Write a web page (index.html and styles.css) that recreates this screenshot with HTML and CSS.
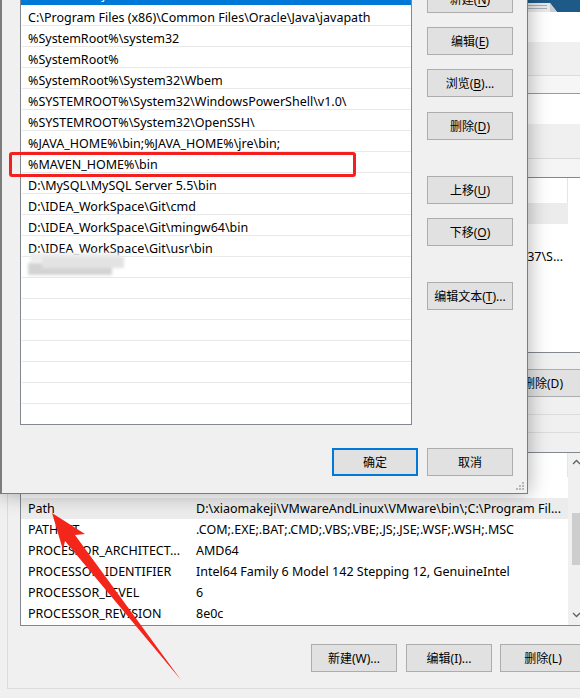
FILE: index.html
```html
<!DOCTYPE html>
<html lang="zh-CN">
<head>
<meta charset="utf-8">
<title>编辑环境变量</title>
<link rel="stylesheet" href="styles.css">
</head>
<body>
<div class="env">
  <div class="titlebar">
    <svg class="tb-icon" width="580" height="12" viewBox="0 0 580 12">
      <path d="M505 3 H550 L557 12 H505 Z" fill="#e6e8ea"/>
      <path d="M550 3 L557 12 H550 Z" fill="#c9ced3"/>
      <path d="M510 5.5 H547 M510 8.5 H547" stroke="#a7adb3" stroke-width="1"/>
    </svg>
  </div>
  <div class="band white h30"></div>
  <div class="band gray h33"></div>

  <div class="group ugroup">
    <div class="u-strip1"></div>
    <div class="u-strip2"></div>
    <div class="u-strip3"></div>
    <div class="vlist ulist">
      <div class="vhead"><span class="c-name">变量</span><span class="c-val">值</span></div>
      <div class="vrow selgray"><span class="c-name">OneDrive</span><span class="c-val">C:\Users\admin\OneDrive</span></div>
      <div class="vrow"><span class="c-name">MAVEN_HOME</span><span class="c-val">D:\apache-maven-3.6.3</span></div>
      <div class="vrow"><span class="c-name">Path</span><span class="c-val right"><span>C:\Users\admin\AppData\Local\Programs\Python\Python37\S...</span></span></div>
      <div class="vrow"><span class="c-name">TEMP</span><span class="c-val">%USERPROFILE%\AppData\Local\Temp</span></div>
    </div>
    <div class="btnrow">
      <span class="btn">新建(N)...</span>
      <span class="btn">编辑(E)...</span>
      <span class="btn">删除(D)</span>
    </div>
  </div>

  <div class="group lgroup">
    <div class="vlist llist">
      <div class="vcols">
        <div class="vhead"><span class="c-name">变量</span><span class="c-val">值</span></div>
        <div class="vrow"><span class="c-name">OS</span><span class="c-val">Windows_NT</span></div>
        <div class="vrow selgray"><span class="c-name">Path</span><span class="c-val">D:\xiaomakeji\VMwareAndLinux\VMware\bin\;C:\Program Fil...</span></div>
        <div class="vrow"><span class="c-name">PATHEXT</span><span class="c-val">.COM;.EXE;.BAT;.CMD;.VBS;.VBE;.JS;.JSE;.WSF;.WSH;.MSC</span></div>
        <div class="vrow"><span class="c-name">PROCESSOR_ARCHITECT...</span><span class="c-val">AMD64</span></div>
        <div class="vrow"><span class="c-name">PROCESSOR_IDENTIFIER</span><span class="c-val">Intel64 Family 6 Model 142 Stepping 12, GenuineIntel</span></div>
        <div class="vrow"><span class="c-name">PROCESSOR_LEVEL</span><span class="c-val">6</span></div>
        <div class="vrow"><span class="c-name">PROCESSOR_REVISION</span><span class="c-val">8e0c</span></div>
      </div>
      <div class="vscroll">
        <svg class="sarrow" width="9" height="6" viewBox="0 0 9 6"><path d="M1 5 L4.5 1.5 L8 5" fill="none" stroke="#606060" stroke-width="1.3"/></svg>
        <div class="sthumb"></div>
        <svg class="sarrow down" width="9" height="6" viewBox="0 0 9 6"><path d="M1 1 L4.5 4.5 L8 1" fill="none" stroke="#606060" stroke-width="1.3"/></svg>
      </div>
    </div>
    <div class="btnrow">
      <span class="btn">新建(W)...</span>
      <span class="btn">编辑(I)...</span>
      <span class="btn">删除(L)</span>
    </div>
  </div>
</div>

<div class="dlg">
  <div class="dlg-main">
    <div class="plist">
      <div class="prow sel">D:\xiaomakeji\VMwareAndLinux\VMware\bin\</div>
      <div class="prow">C:\Program Files (x86)\Common Files\Oracle\Java\javapath</div>
      <div class="prow">%SystemRoot%\system32</div>
      <div class="prow">%SystemRoot%</div>
      <div class="prow">%SystemRoot%\System32\Wbem</div>
      <div class="prow">%SYSTEMROOT%\System32\WindowsPowerShell\v1.0\</div>
      <div class="prow">%SYSTEMROOT%\System32\OpenSSH\</div>
      <div class="prow">%JAVA_HOME%\bin;%JAVA_HOME%\jre\bin;</div>
      <div class="prow">%MAVEN_HOME%\bin</div>
      <div class="prow">D:\MySQL\MySQL Server 5.5\bin</div>
      <div class="prow">D:\IDEA_WorkSpace\Git\cmd</div>
      <div class="prow">D:\IDEA_WorkSpace\Git\mingw64\bin</div>
      <div class="prow">D:\IDEA_WorkSpace\Git\usr\bin</div>
      <div class="prow blurrow"><span class="mosaic"><i class="m1"></i><i class="m2"></i><i class="m3"></i></span></div>
      <div class="prow"></div>
      <div class="prow"></div>
      <div class="prow"></div>
      <div class="prow"></div>
      <div class="prow"></div>
      <div class="prow"></div>
      <div class="prow"></div>
    </div>
    <div class="btncol">
      <span class="btn b-new">新建(<u>N</u>)</span>
      <span class="btn">编辑(<u>E</u>)</span>
      <span class="btn">浏览(<u>B</u>)...</span>
      <span class="btn b-del">删除(<u>D</u>)</span>
      <span class="btn b-gap">上移(<u>U</u>)</span>
      <span class="btn">下移(<u>O</u>)</span>
      <span class="btn b-gap">编辑文本(<u>T</u>)...</span>
    </div>
  </div>
  <div class="dlg-foot">
    <span class="btn primary">确定</span>
    <span class="btn">取消</span>
  </div>
  <svg class="grip" width="9" height="9" viewBox="0 0 9 9">
    <rect x="7" y="0" width="2" height="2" fill="#b8b8b8"/>
    <rect x="4" y="3" width="2" height="2" fill="#b8b8b8"/>
    <rect x="7" y="3" width="2" height="2" fill="#b8b8b8"/>
    <rect x="1" y="6" width="2" height="2" fill="#b8b8b8"/>
    <rect x="4" y="6" width="2" height="2" fill="#b8b8b8"/>
    <rect x="7" y="6" width="2" height="2" fill="#b8b8b8"/>
  </svg>
  <div class="redbox"></div>
</div>

<svg class="arrow" width="580" height="698" viewBox="0 0 580 698">
  <polygon points="52,513 85,534 75,535 181,680 65,541 63,550" fill="#f3261c"/>
</svg>
</body>
</html>
```

FILE: styles.css
```css
* { box-sizing: border-box; }
html, body { margin: 0; padding: 0; }
body {
  width: 580px;
  height: 698px;
  overflow: hidden;
  position: relative;
  background: #f0f0f0;
  color: #000;
  font-family: "Noto Sans", "Noto Sans CJK SC", sans-serif;
  font-size: 12.5px;
}

/* background window */
.env { width: 600px; }
.titlebar { height: 12px; background: #1d5a87; }
.tb-icon { display: block; }
.band { width: 100%; }
.white { background: #fff; }
.gray { background: #f0f0f0; }
.h30 { height: 30px; }
.h33 { height: 33px; }

.group {
  margin-left: 7px;
  width: 593px;
  border: 1px solid #dcdcdc;
  padding: 0 13px 0 12px;
}
.ugroup { padding-bottom: 17px; }
.lgroup { margin-top: 17px; padding-top: 19px; padding-bottom: 16px; }

.u-strip1 { height: 17px; background: #f6f6f6; }
.u-strip2 { height: 31px; background: #fff; border-top: 1px solid #9a9a9a; }
.u-strip3 {
  height: 53px;
  background: linear-gradient(#f0f0f0 0 34px, #d9d9d9 34px 35px, #f5f5f5 35px);
}

.vlist {
  height: 176px;
  border: 1px solid #828790;
  background: #fff;
  overflow: hidden;
}
.ulist { height: 176px; }
.llist { height: 174px; display: flex; }
.vcols { width: 547px; flex: none; overflow: hidden; }
.vhead {
  display: flex;
  height: 25px;
  align-items: center;
}
.llist .vhead { height: 24px; }
.vhead .c-val { border-right: 1px solid #e5e5e5; height: 100%; display: flex; align-items: center; }
.vrow {
  display: flex;
  height: 21px;
  align-items: center;
  white-space: nowrap;
}
.ulist .vrow { padding-top: 2px; }
.c-name {
  width: 168px;
  flex: none;
  padding-left: 7px;
  overflow: hidden;
}
.c-val {
  width: 379px;
  flex: none;
  padding-left: 7px;
  overflow: hidden;
}
.c-val.right {
  display: flex;
  justify-content: flex-end;
  padding-right: 5px;
}
.c-val.right span { flex: none; }
.selgray { background: #ececec; width: 547px; }

.vscroll {
  width: 17px;
  flex: none;
  background: #f0f0f0;
  display: flex;
  flex-direction: column;
  align-items: center;
  padding-top: 6px;
}
.sarrow { display: block; }
.sthumb {
  width: 9px;
  height: 52px;
  background: #cdcdcd;
  margin-top: 48px;
}
.sarrow.down { margin-top: 47px; }

.btnrow {
  display: flex;
  justify-content: flex-end;
  gap: 9px;
  margin-top: 16px;
}
.lgroup .btnrow { margin-top: 18px; }
.btnrow .btn:last-child { margin-left: -1px; }

.btn {
  display: flex;
  align-items: center;
  justify-content: center;
  width: 86px;
  height: 28px;
  background: #e1e1e1;
  border: 1px solid #adadad;
  font-size: 12px;
  white-space: nowrap;
}
.btn u { text-decoration-thickness: 1px; text-underline-offset: 2px; }

/* foreground dialog */
.dlg {
  position: absolute;
  left: 0;
  top: -40px;
  width: 528px;
  height: 534px;
  background: #f0f0f0;
  border: 1px solid #7d7d7d;
  border-left-width: 2px;
  padding: 22px 14px 0 18px;
  box-shadow: 0 0 20px rgba(0, 0, 0, 0.33);
}
.dlg-main {
  display: flex;
  gap: 15px;
}
.plist {
  width: 392px;
  height: 442px;
  border: 1px solid #828790;
  background: #fff;
  overflow: hidden;
  flex: none;
}
.prow {
  height: 21px;
  line-height: 16px;
  padding-top: 5px;
  padding-left: 6px;
  margin-left: 1px;
  border-bottom: 1px solid #e8e8e8;
  white-space: nowrap;
}
.prow.sel {
  background: #0078d7;
  color: #fff;
  border-bottom-color: #0078d7;
  margin-left: 0;
  padding-left: 7px;
  padding-top: 3px;
  overflow: hidden;
}
.blurrow { padding-top: 0; }
.mosaic { display: block; position: relative; height: 20px; filter: blur(1.5px); }
.mosaic i { position: absolute; display: block; }
.m1 { left: 2px; top: -4px; width: 90px; height: 9px; background: #ededed; }
.m2 { left: 0; top: 6px; width: 84px; height: 12px; background: #d3d3d3; }
.m3 { left: 14px; top: 0; width: 82px; height: 11px; background: #e3e3e3; }

.btncol {
  display: flex;
  flex-direction: column;
  gap: 14px;
  padding-top: 2px;
}
.btncol .b-del { margin-top: 1px; }
.btncol .b-gap { margin-top: 22px; }

.dlg-foot {
  display: flex;
  justify-content: flex-end;
  gap: 9px;
  margin-top: 23px;
}
.btn.primary { border: 2px solid #0078d7; }

.grip { position: absolute; right: 3px; bottom: 2px; }

.redbox {
  position: absolute;
  left: 7px;
  top: 191px;
  width: 347px;
  height: 25px;
  border: 3px solid #f41f1f;
  border-radius: 3px;
}

.arrow { position: absolute; left: 0; top: 0; pointer-events: none; }
```
